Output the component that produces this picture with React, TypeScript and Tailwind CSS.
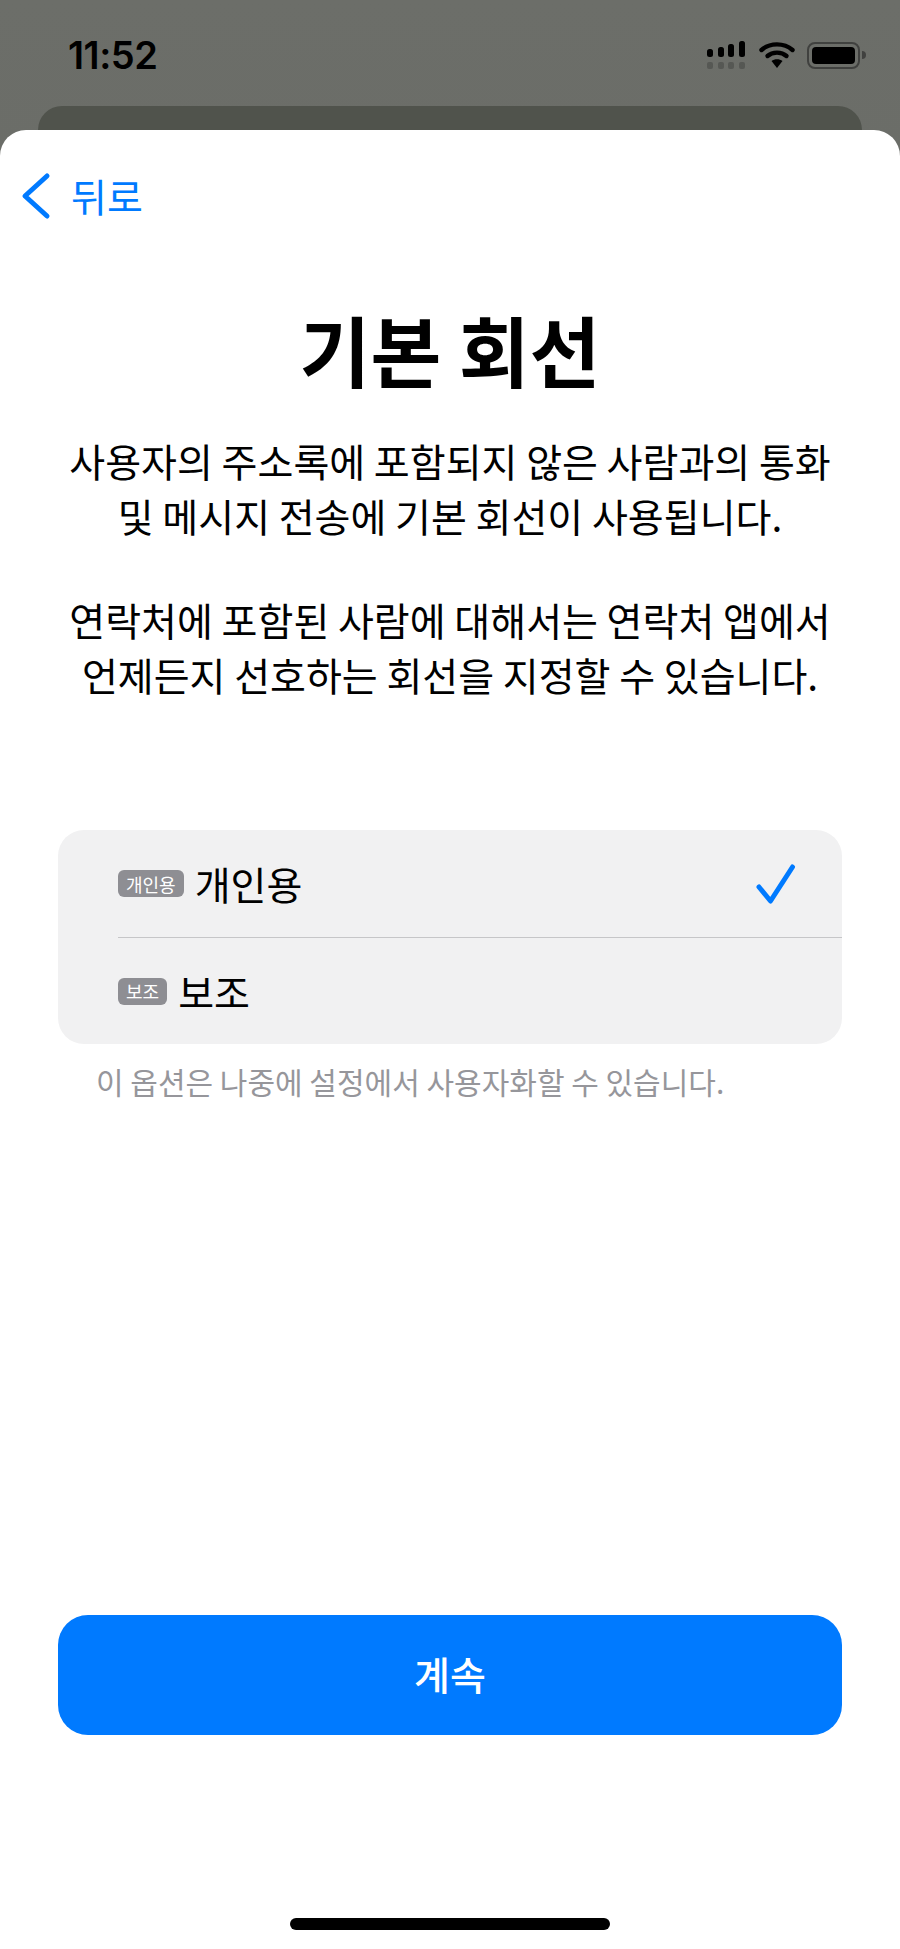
const KR = "font-['Noto_Sans_CJK_KR','Noto_Sans',sans-serif]";

function StatusIcons() {
  return (
    <div className="flex items-center">
      {/* signal, dual sim: dim dots under the bars */}
      <svg width="38" height="28" viewBox="0 0 38 28">
        <rect x="0" y="8" width="6" height="8" rx="2.5" fill="#000" />
        <rect x="11" y="6" width="6" height="10" rx="2.5" fill="#000" />
        <rect x="21" y="3" width="6" height="13" rx="2.5" fill="#000" />
        <rect x="32" y="0" width="6" height="16" rx="2.5" fill="#000" />
        <rect x="0" y="21" width="6" height="7" rx="2" fill="#000" opacity="0.2" />
        <rect x="11" y="21" width="6" height="7" rx="2" fill="#000" opacity="0.2" />
        <rect x="21" y="21" width="6" height="7" rx="2" fill="#000" opacity="0.2" />
        <rect x="32" y="21" width="6" height="7" rx="2" fill="#000" opacity="0.2" />
      </svg>
      <svg width="36" height="28" viewBox="0 0 36 28" fill="none" className="ml-[14px]">
        <path d="M2.5 9C11 1.5 25 1.5 33.5 9" stroke="#000" strokeWidth="4.4" strokeLinecap="round" />
        <path d="M8.5 15C13.5 10.5 22.5 10.5 27.5 15" stroke="#000" strokeWidth="4.4" strokeLinecap="round" />
        <path d="M12.5 20C15.5 17.5 20.5 17.5 23.5 20L18 27Z" fill="#000" />
      </svg>
      <div className="flex items-center ml-[12px]">
        <div className="w-[53px] h-[27px] rounded-[8px] border-2 border-[#40413f] p-[3px]">
          <div className="w-full h-full rounded-[4px] bg-black" />
        </div>
        <div className="w-[4px] h-[8px] rounded-r-full bg-[#40413f] ml-[2px]" />
      </div>
    </div>
  );
}

function Badge({ label }: { label: string }) {
  return (
    <span className="inline-flex items-center justify-center h-[27px] px-[8px] rounded-[6px] bg-[#8e8e93] text-white text-[18px] leading-none">
      {label}
    </span>
  );
}

export default function App() {
  return (
    <div className={`${KR} w-[900px] h-[1949px] flex flex-col bg-gradient-to-b from-[#6c6e69] to-[#5f625c]`}>
      <div className="h-[106px] flex items-center justify-between pl-[68px] pr-[34px] pt-[4px]">
        <span className="font-['Inter',sans-serif] font-semibold text-[38px] tracking-[-0.5px] text-black">11:52</span>
        <StatusIcons />
      </div>
      <div className="mx-[38px] h-[24px] rounded-t-[24px] bg-[#50534c]" />
      <div className="flex-1 flex flex-col bg-white rounded-t-[26px]">
        <button className="flex items-center self-start h-[56px] mt-[38px] pl-[21px] text-[#007aff]">
          <svg width="30" height="48" viewBox="0 0 30 48" fill="none">
            <path d="M26 4L4 24L26 44" stroke="#007aff" strokeWidth="5" strokeLinecap="round" strokeLinejoin="round" />
          </svg>
          <span className="ml-[20px] text-[39px] leading-none -mt-[2px]">뒤로</span>
        </button>

        <h1 className="mt-[81px] text-center text-[77px] leading-[88px] font-bold text-black">기본 회선</h1>

        <div className="mt-[40px] text-center text-[39px] leading-[55px] text-black">
          <p>사용자의 주소록에 포함되지 않은 사람과의 통화</p>
          <p>및 메시지 전송에 기본 회선이 사용됩니다.</p>
          <p className="mt-[49px]">연락처에 포함된 사람에 대해서는 연락처 앱에서</p>
          <p>언제든지 선호하는 회선을 지정할 수 있습니다.</p>
        </div>

        <div className="mt-[128px] mx-[58px] rounded-[26px] bg-[#f1f1f2]">
          <div className="h-[107px] flex items-center justify-between pl-[60px] pr-[46px]">
            <div className="flex items-center gap-[11px]">
              <Badge label="개인용" />
              <span className="text-[39px] leading-none text-black">개인용</span>
            </div>
            <svg width="40" height="40" viewBox="0 0 40 40" fill="none">
              <path d="M3 23L14.5 37L36.5 3" stroke="#007aff" strokeWidth="5" strokeLinecap="round" strokeLinejoin="round" />
            </svg>
          </div>
          <div className="ml-[60px] h-px bg-[#c6c6c8]" />
          <div className="h-[106px] flex items-center pl-[60px]">
            <div className="flex items-center gap-[11px]">
              <Badge label="보조" />
              <span className="text-[39px] leading-none text-black">보조</span>
            </div>
          </div>
        </div>
        <p className="mt-[18px] pl-[96px] text-[30px] leading-[38px] text-[#96969b]">이 옵션은 나중에 설정에서 사용자화할 수 있습니다.</p>

        <button className="mt-[515px] mx-[58px] h-[120px] pb-[3px] rounded-[30px] bg-[#007aff] text-white text-[39px] font-medium">계속</button>

        <div className="mt-[183px] mx-auto w-[320px] h-[12px] rounded-full bg-black" />
      </div>
    </div>
  );
}
